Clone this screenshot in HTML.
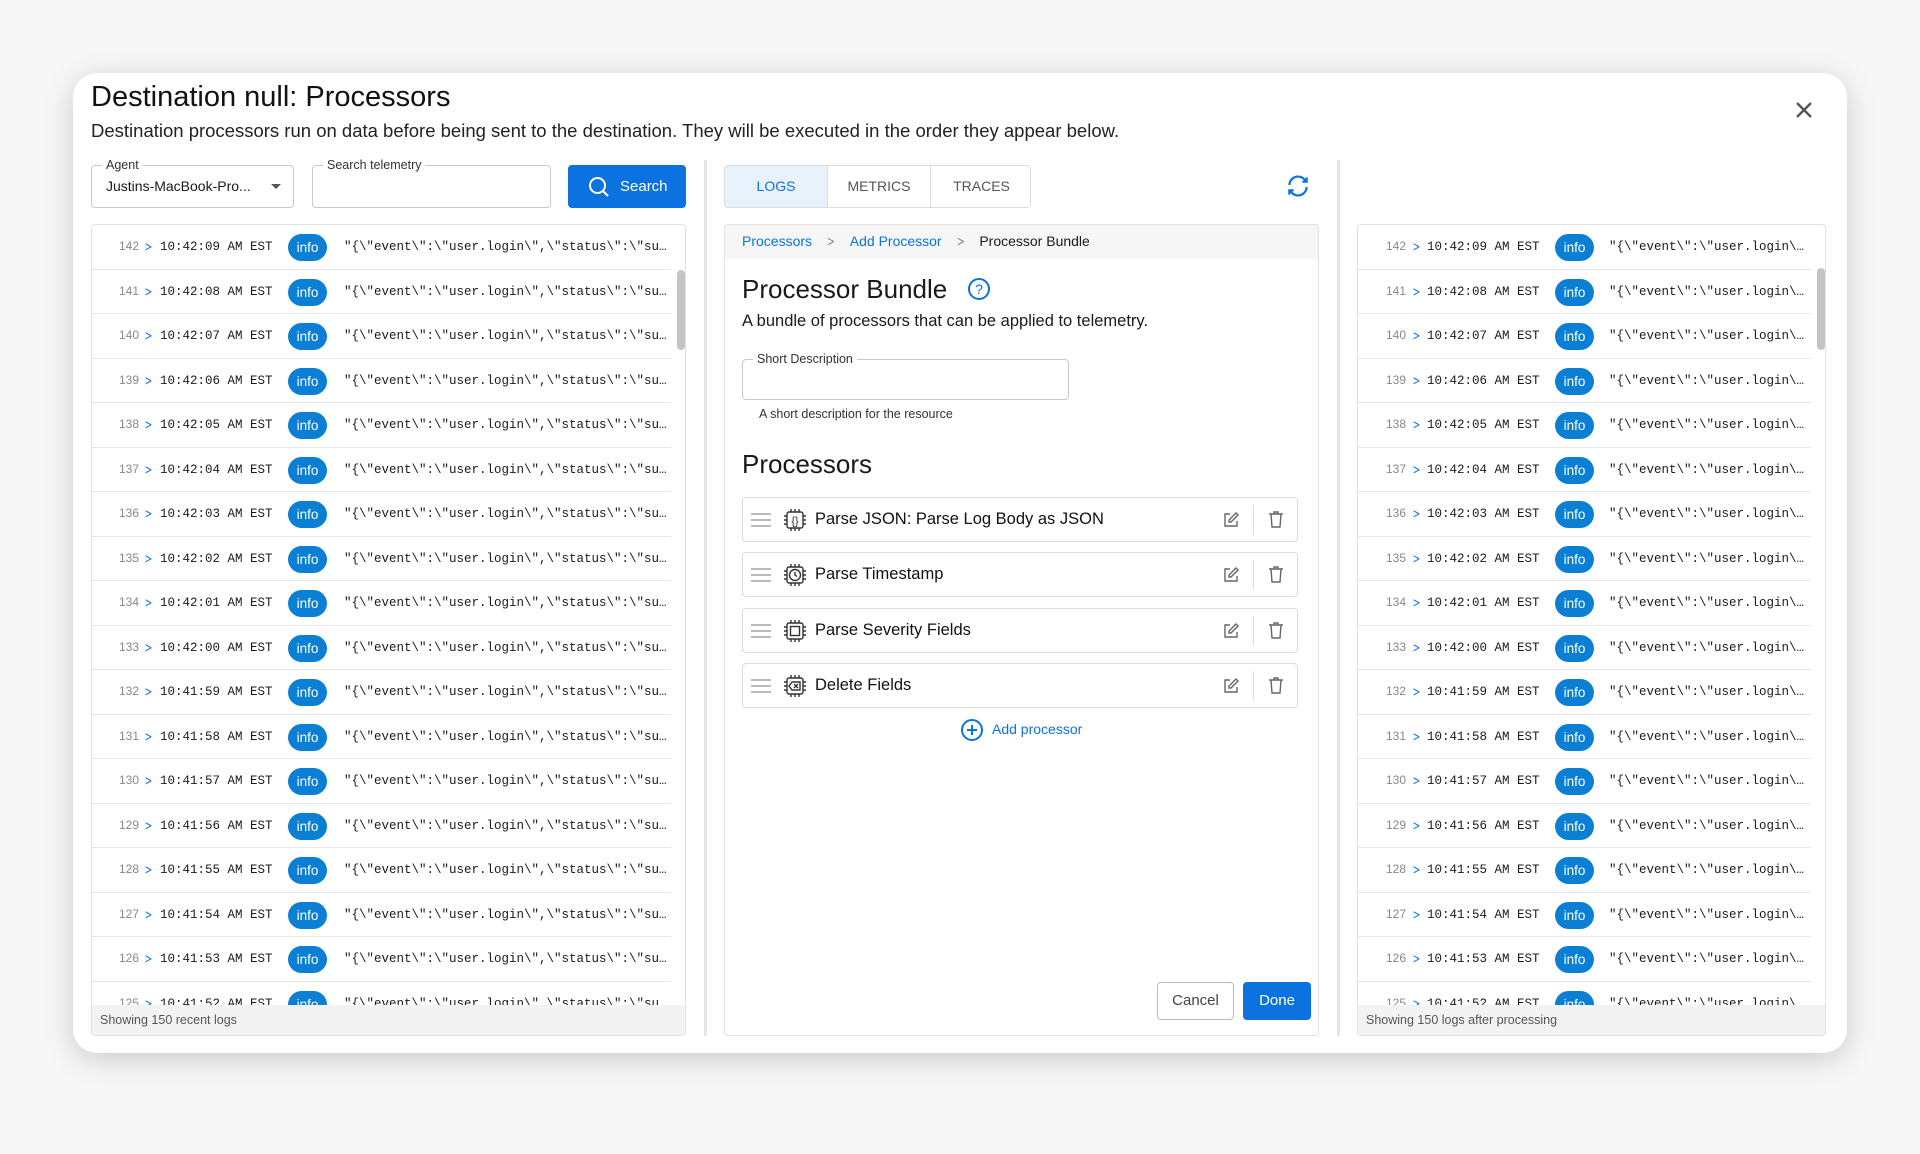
<!DOCTYPE html>
<html><head><meta charset="utf-8"><style>
*{box-sizing:border-box;margin:0;padding:0}
body{width:1920px;height:1154px;background:#f7f7f7;font-family:"Liberation Sans",sans-serif;color:#1a1a1a;position:relative;overflow:hidden}
.dlg{position:absolute;left:73px;top:73px;width:1774px;height:980px;background:#fff;border-radius:24px;box-shadow:0 6px 30px rgba(0,0,0,.18)}
.abs{position:absolute}
.title{left:18px;top:8px;font-size:29px;color:#111}
.sub{left:18px;top:47px;font-size:18.5px;color:#222}
.fld{border:1px solid #c8c8c8;border-radius:4px;background:#fff}
.lbl{position:absolute;top:-8px;left:10px;background:#fff;padding:0 4px;font-size:12.5px;color:#333}
.panel{position:absolute;border:1px solid #e2e2e2;border-radius:4px;overflow:hidden;background:#fff}
.rows{position:absolute;left:0;top:0;right:0;bottom:30px;overflow:hidden}
.row{height:44.5px;border-bottom:1px solid #e6e6e6;position:relative;font-family:"Liberation Mono",monospace;font-size:12.5px;white-space:nowrap;margin-right:14px}
.row span{position:absolute;top:15px}
.row span.n{top:14px}
.n{color:#888;font-size:12px;font-family:"Liberation Sans",sans-serif}
.ch{color:#0b72e0;font-family:"DejaVu Sans",sans-serif;font-size:13px;top:15px!important;transform:scaleX(.7)}
.pill{top:9px!important;height:27px;width:39px;border-radius:14px;background:#0a7fd4;color:#fff;font-family:"Liberation Sans",sans-serif;font-size:13.5px;text-align:center;line-height:27px}
.foot{position:absolute;left:0;right:0;bottom:0;height:30px;background:#f3f3f4;font-size:12.5px;color:#555;padding:8px 0 0 8px}
.sb{position:absolute;width:8px;border-radius:4px;background:#c4c4c4}
.proc{position:absolute;left:17px;width:556px;height:45px;border:1px solid #ddd;border-radius:4px;background:#fff}
.proc .t{position:absolute;left:72px;top:12px;font-size:16.5px;color:#111}
.hnd{position:absolute;left:8px;top:15px;width:20px;height:14px;border-top:2px solid #bbb;border-bottom:2px solid #bbb}
.hnd:after{content:"";position:absolute;left:0;right:0;top:4px;border-top:2px solid #bbb}
.vd{position:absolute;left:510px;top:7px;height:30px;border-left:1px solid #ddd}
.bs{color:#888;margin:0 13px;font-family:"DejaVu Sans",sans-serif;display:inline-block;transform:scaleX(.7)}
</style></head><body>
<div class="dlg">
<div class="abs title">Destination null: Processors</div>
<div class="abs sub">Destination processors run on data before being sent to the destination. They will be executed in the order they appear below.</div>
<svg class="abs" style="left:1721px;top:27px" width="20" height="20" viewBox="0 0 20 20"><path d="M3 3L17 17M17 3L3 17" stroke="#555" stroke-width="2.4"/></svg>

<div class="abs fld" style="left:18px;top:92px;width:203px;height:43px"><div class="lbl">Agent</div><div class="abs" style="left:14px;top:12px;font-size:14px">Justins-MacBook-Pro...</div><div class="abs" style="left:179px;top:18px;border:5px solid transparent;border-top:5px solid #555"></div></div>
<div class="abs fld" style="left:239px;top:92px;width:239px;height:43px"><div class="lbl">Search telemetry</div></div>
<div class="abs" style="left:495px;top:92px;width:118px;height:43px;background:#0b72e0;border-radius:4px;color:#fff;font-size:15px">
<svg class="abs" style="left:20px;top:11px" width="22" height="22" viewBox="0 0 22 22"><circle cx="9.5" cy="9.5" r="7.5" fill="none" stroke="#fff" stroke-width="2"/><path d="M15 15l5 5" stroke="#fff" stroke-width="2"/></svg>
<span class="abs" style="left:52px;top:13px">Search</span></div>

<div class="panel" style="left:18px;top:151px;width:595px;height:812px"><div class="rows">
<div class="row"><span class="n" style="left:27px">142</span><span class="ch" style="left:51px">&gt;</span><span style="left:68px">10:42:09 AM EST</span><span class="pill" style="left:196px">info</span><span style="left:252px">"{\"event\":\"user.login\",\"status\":\"su…</span></div>
<div class="row"><span class="n" style="left:27px">141</span><span class="ch" style="left:51px">&gt;</span><span style="left:68px">10:42:08 AM EST</span><span class="pill" style="left:196px">info</span><span style="left:252px">"{\"event\":\"user.login\",\"status\":\"su…</span></div>
<div class="row"><span class="n" style="left:27px">140</span><span class="ch" style="left:51px">&gt;</span><span style="left:68px">10:42:07 AM EST</span><span class="pill" style="left:196px">info</span><span style="left:252px">"{\"event\":\"user.login\",\"status\":\"su…</span></div>
<div class="row"><span class="n" style="left:27px">139</span><span class="ch" style="left:51px">&gt;</span><span style="left:68px">10:42:06 AM EST</span><span class="pill" style="left:196px">info</span><span style="left:252px">"{\"event\":\"user.login\",\"status\":\"su…</span></div>
<div class="row"><span class="n" style="left:27px">138</span><span class="ch" style="left:51px">&gt;</span><span style="left:68px">10:42:05 AM EST</span><span class="pill" style="left:196px">info</span><span style="left:252px">"{\"event\":\"user.login\",\"status\":\"su…</span></div>
<div class="row"><span class="n" style="left:27px">137</span><span class="ch" style="left:51px">&gt;</span><span style="left:68px">10:42:04 AM EST</span><span class="pill" style="left:196px">info</span><span style="left:252px">"{\"event\":\"user.login\",\"status\":\"su…</span></div>
<div class="row"><span class="n" style="left:27px">136</span><span class="ch" style="left:51px">&gt;</span><span style="left:68px">10:42:03 AM EST</span><span class="pill" style="left:196px">info</span><span style="left:252px">"{\"event\":\"user.login\",\"status\":\"su…</span></div>
<div class="row"><span class="n" style="left:27px">135</span><span class="ch" style="left:51px">&gt;</span><span style="left:68px">10:42:02 AM EST</span><span class="pill" style="left:196px">info</span><span style="left:252px">"{\"event\":\"user.login\",\"status\":\"su…</span></div>
<div class="row"><span class="n" style="left:27px">134</span><span class="ch" style="left:51px">&gt;</span><span style="left:68px">10:42:01 AM EST</span><span class="pill" style="left:196px">info</span><span style="left:252px">"{\"event\":\"user.login\",\"status\":\"su…</span></div>
<div class="row"><span class="n" style="left:27px">133</span><span class="ch" style="left:51px">&gt;</span><span style="left:68px">10:42:00 AM EST</span><span class="pill" style="left:196px">info</span><span style="left:252px">"{\"event\":\"user.login\",\"status\":\"su…</span></div>
<div class="row"><span class="n" style="left:27px">132</span><span class="ch" style="left:51px">&gt;</span><span style="left:68px">10:41:59 AM EST</span><span class="pill" style="left:196px">info</span><span style="left:252px">"{\"event\":\"user.login\",\"status\":\"su…</span></div>
<div class="row"><span class="n" style="left:27px">131</span><span class="ch" style="left:51px">&gt;</span><span style="left:68px">10:41:58 AM EST</span><span class="pill" style="left:196px">info</span><span style="left:252px">"{\"event\":\"user.login\",\"status\":\"su…</span></div>
<div class="row"><span class="n" style="left:27px">130</span><span class="ch" style="left:51px">&gt;</span><span style="left:68px">10:41:57 AM EST</span><span class="pill" style="left:196px">info</span><span style="left:252px">"{\"event\":\"user.login\",\"status\":\"su…</span></div>
<div class="row"><span class="n" style="left:27px">129</span><span class="ch" style="left:51px">&gt;</span><span style="left:68px">10:41:56 AM EST</span><span class="pill" style="left:196px">info</span><span style="left:252px">"{\"event\":\"user.login\",\"status\":\"su…</span></div>
<div class="row"><span class="n" style="left:27px">128</span><span class="ch" style="left:51px">&gt;</span><span style="left:68px">10:41:55 AM EST</span><span class="pill" style="left:196px">info</span><span style="left:252px">"{\"event\":\"user.login\",\"status\":\"su…</span></div>
<div class="row"><span class="n" style="left:27px">127</span><span class="ch" style="left:51px">&gt;</span><span style="left:68px">10:41:54 AM EST</span><span class="pill" style="left:196px">info</span><span style="left:252px">"{\"event\":\"user.login\",\"status\":\"su…</span></div>
<div class="row"><span class="n" style="left:27px">126</span><span class="ch" style="left:51px">&gt;</span><span style="left:68px">10:41:53 AM EST</span><span class="pill" style="left:196px">info</span><span style="left:252px">"{\"event\":\"user.login\",\"status\":\"su…</span></div>
<div class="row"><span class="n" style="left:27px">125</span><span class="ch" style="left:51px">&gt;</span><span style="left:68px">10:41:52 AM EST</span><span class="pill" style="left:196px">info</span><span style="left:252px">"{\"event\":\"user.login\",\"status\":\"su…</span></div>
</div><div class="sb" style="left:585px;top:45px;height:80px"></div><div class="foot">Showing 150 recent logs</div></div>

<div class="abs" style="left:631px;top:87px;height:876px;border-left:3px solid #e6e6e6"></div>

<div class="abs" style="left:651px;top:92px;width:307px;height:43px;border:1px solid #ddd;border-radius:4px;font-size:14px;color:#555;overflow:hidden">
<div class="abs" style="left:0;top:0;width:103px;height:41px;background:#e8f2fd;color:#0b72e0;text-align:center;line-height:41px;border-right:1px solid #ddd">LOGS</div>
<div class="abs" style="left:103px;top:0;width:103px;height:41px;text-align:center;line-height:41px;border-right:1px solid #ddd">METRICS</div>
<div class="abs" style="left:206px;top:0;width:101px;height:41px;text-align:center;line-height:41px">TRACES</div></div>
<svg class="abs" style="left:1212px;top:100px" width="26" height="26" viewBox="0 0 24 24" fill="none" stroke="#0b72e0" stroke-width="2"><path d="M4 11a8 8 0 0 1 14-5l2 2M20 4v4h-4M20 13a8 8 0 0 1-14 5l-2-2M4 20v-4h4"/></svg>

<div class="panel" style="left:651px;top:151px;width:595px;height:812px">
<div class="abs" style="left:0;top:0;right:0;height:34px;background:#f6f6f7;font-size:14px;padding:8px 0 0 17px"><span style="color:#0b72e0">Processors</span><span class="bs">&gt;</span><span style="color:#0b72e0">Add Processor</span><span class="bs">&gt;</span><span>Processor Bundle</span></div>
<div class="abs" style="left:17px;top:49px;font-size:26px">Processor Bundle</div>
<svg class="abs" style="left:242px;top:52px" width="24" height="24" viewBox="0 0 24 24"><circle cx="12" cy="12" r="10" fill="none" stroke="#0b72e0" stroke-width="2"/><text x="12" y="17" text-anchor="middle" font-size="14" fill="#0b72e0" font-family="Liberation Sans">?</text></svg>
<div class="abs" style="left:17px;top:87px;font-size:16.5px">A bundle of processors that can be applied to telemetry.</div>
<div class="abs fld" style="left:17px;top:134px;width:327px;height:41px"><div class="lbl">Short Description</div></div>
<div class="abs" style="left:34px;top:182px;font-size:12.5px;color:#333">A short description for the resource</div>
<div class="abs" style="left:17px;top:224px;font-size:26px">Processors</div>
<div class="proc" style="top:272px"><div class="hnd"></div><svg class="abs" style="left:40px;top:10px" width="24" height="24" viewBox="0 0 24 24" fill="none" stroke="#333" stroke-width="1.4"><rect x="4" y="4" width="16" height="16" rx="2"/><path d="M8 1v3M12 1v3M16 1v3M8 20v3M12 20v3M16 20v3M1 8h3M1 12h3M1 16h3M20 8h3M20 12h3M20 16h3"/><text x="12" y="16.5" text-anchor="middle" font-size="11" fill="#333" stroke="none" font-family="Liberation Sans">{}</text></svg><div class="t">Parse JSON: Parse Log Body as JSON</div><svg class="abs" style="left:479px;top:13px" width="18" height="18" viewBox="0 0 18 18" fill="none" stroke="#666" stroke-width="1.4"><path d="M8 3H3v12h12v-5M14 2l2 2-7 7H7V9z"/></svg><div class="vd"></div><svg class="abs" style="left:525px;top:12px" width="16" height="19" viewBox="0 0 16 19" fill="none" stroke="#666" stroke-width="1.4"><path d="M1 4h14M6 4V2h4v2M3 4l1 13h8l1-13"/></svg></div>
<div class="proc" style="top:327px"><div class="hnd"></div><svg class="abs" style="left:40px;top:10px" width="24" height="24" viewBox="0 0 24 24" fill="none" stroke="#333" stroke-width="1.4"><rect x="4" y="4" width="16" height="16" rx="2"/><path d="M8 1v3M12 1v3M16 1v3M8 20v3M12 20v3M16 20v3M1 8h3M1 12h3M1 16h3M20 8h3M20 12h3M20 16h3"/><circle cx="12" cy="12" r="5.5"/><path d="M12 9v3l2 1.5"/></svg><div class="t">Parse Timestamp</div><svg class="abs" style="left:479px;top:13px" width="18" height="18" viewBox="0 0 18 18" fill="none" stroke="#666" stroke-width="1.4"><path d="M8 3H3v12h12v-5M14 2l2 2-7 7H7V9z"/></svg><div class="vd"></div><svg class="abs" style="left:525px;top:12px" width="16" height="19" viewBox="0 0 16 19" fill="none" stroke="#666" stroke-width="1.4"><path d="M1 4h14M6 4V2h4v2M3 4l1 13h8l1-13"/></svg></div>
<div class="proc" style="top:383px"><div class="hnd"></div><svg class="abs" style="left:40px;top:10px" width="24" height="24" viewBox="0 0 24 24" fill="none" stroke="#333" stroke-width="1.4"><rect x="4" y="4" width="16" height="16" rx="2"/><path d="M8 1v3M12 1v3M16 1v3M8 20v3M12 20v3M16 20v3M1 8h3M1 12h3M1 16h3M20 8h3M20 12h3M20 16h3"/><rect x="7.5" y="7.5" width="9" height="9"/></svg><div class="t">Parse Severity Fields</div><svg class="abs" style="left:479px;top:13px" width="18" height="18" viewBox="0 0 18 18" fill="none" stroke="#666" stroke-width="1.4"><path d="M8 3H3v12h12v-5M14 2l2 2-7 7H7V9z"/></svg><div class="vd"></div><svg class="abs" style="left:525px;top:12px" width="16" height="19" viewBox="0 0 16 19" fill="none" stroke="#666" stroke-width="1.4"><path d="M1 4h14M6 4V2h4v2M3 4l1 13h8l1-13"/></svg></div>
<div class="proc" style="top:438px"><div class="hnd"></div><svg class="abs" style="left:40px;top:10px" width="24" height="24" viewBox="0 0 24 24" fill="none" stroke="#333" stroke-width="1.4"><rect x="4" y="4" width="16" height="16" rx="2"/><path d="M8 1v3M12 1v3M16 1v3M8 20v3M12 20v3M16 20v3M1 8h3M1 12h3M1 16h3M20 8h3M20 12h3M20 16h3"/><path d="M6 12l3-4h8v8H9zM11 10l4 4M15 10l-4 4"/></svg><div class="t">Delete Fields</div><svg class="abs" style="left:479px;top:13px" width="18" height="18" viewBox="0 0 18 18" fill="none" stroke="#666" stroke-width="1.4"><path d="M8 3H3v12h12v-5M14 2l2 2-7 7H7V9z"/></svg><div class="vd"></div><svg class="abs" style="left:525px;top:12px" width="16" height="19" viewBox="0 0 16 19" fill="none" stroke="#666" stroke-width="1.4"><path d="M1 4h14M6 4V2h4v2M3 4l1 13h8l1-13"/></svg></div>
<svg class="abs" style="left:235px;top:493px" width="24" height="24" viewBox="0 0 24 24" fill="none" stroke="#0b72e0" stroke-width="2"><circle cx="12" cy="12" r="10"/><path d="M12 7v10M7 12h10"/></svg>
<div class="abs" style="left:267px;top:496px;font-size:14px;color:#0b72e0">Add processor</div>
<div class="abs" style="left:432px;top:757px;width:77px;height:38px;border:1px solid #bbb;border-radius:4px;text-align:center;line-height:36px;font-size:15px;color:#444">Cancel</div>
<div class="abs" style="left:518px;top:757px;width:68px;height:38px;background:#0b72e0;border-radius:4px;text-align:center;line-height:38px;font-size:15px;color:#fff">Done</div>
</div>

<div class="abs" style="left:1264px;top:87px;height:876px;border-left:3px solid #e6e6e6"></div>

<div class="panel" style="left:1284px;top:151px;width:469px;height:812px"><div class="rows">
<div class="row"><span class="n" style="left:28px">142</span><span class="ch" style="left:53px">&gt;</span><span style="left:69px">10:42:09 AM EST</span><span class="pill" style="left:197px">info</span><span style="left:251px">"{\"event\":\"user.login\…</span></div>
<div class="row"><span class="n" style="left:28px">141</span><span class="ch" style="left:53px">&gt;</span><span style="left:69px">10:42:08 AM EST</span><span class="pill" style="left:197px">info</span><span style="left:251px">"{\"event\":\"user.login\…</span></div>
<div class="row"><span class="n" style="left:28px">140</span><span class="ch" style="left:53px">&gt;</span><span style="left:69px">10:42:07 AM EST</span><span class="pill" style="left:197px">info</span><span style="left:251px">"{\"event\":\"user.login\…</span></div>
<div class="row"><span class="n" style="left:28px">139</span><span class="ch" style="left:53px">&gt;</span><span style="left:69px">10:42:06 AM EST</span><span class="pill" style="left:197px">info</span><span style="left:251px">"{\"event\":\"user.login\…</span></div>
<div class="row"><span class="n" style="left:28px">138</span><span class="ch" style="left:53px">&gt;</span><span style="left:69px">10:42:05 AM EST</span><span class="pill" style="left:197px">info</span><span style="left:251px">"{\"event\":\"user.login\…</span></div>
<div class="row"><span class="n" style="left:28px">137</span><span class="ch" style="left:53px">&gt;</span><span style="left:69px">10:42:04 AM EST</span><span class="pill" style="left:197px">info</span><span style="left:251px">"{\"event\":\"user.login\…</span></div>
<div class="row"><span class="n" style="left:28px">136</span><span class="ch" style="left:53px">&gt;</span><span style="left:69px">10:42:03 AM EST</span><span class="pill" style="left:197px">info</span><span style="left:251px">"{\"event\":\"user.login\…</span></div>
<div class="row"><span class="n" style="left:28px">135</span><span class="ch" style="left:53px">&gt;</span><span style="left:69px">10:42:02 AM EST</span><span class="pill" style="left:197px">info</span><span style="left:251px">"{\"event\":\"user.login\…</span></div>
<div class="row"><span class="n" style="left:28px">134</span><span class="ch" style="left:53px">&gt;</span><span style="left:69px">10:42:01 AM EST</span><span class="pill" style="left:197px">info</span><span style="left:251px">"{\"event\":\"user.login\…</span></div>
<div class="row"><span class="n" style="left:28px">133</span><span class="ch" style="left:53px">&gt;</span><span style="left:69px">10:42:00 AM EST</span><span class="pill" style="left:197px">info</span><span style="left:251px">"{\"event\":\"user.login\…</span></div>
<div class="row"><span class="n" style="left:28px">132</span><span class="ch" style="left:53px">&gt;</span><span style="left:69px">10:41:59 AM EST</span><span class="pill" style="left:197px">info</span><span style="left:251px">"{\"event\":\"user.login\…</span></div>
<div class="row"><span class="n" style="left:28px">131</span><span class="ch" style="left:53px">&gt;</span><span style="left:69px">10:41:58 AM EST</span><span class="pill" style="left:197px">info</span><span style="left:251px">"{\"event\":\"user.login\…</span></div>
<div class="row"><span class="n" style="left:28px">130</span><span class="ch" style="left:53px">&gt;</span><span style="left:69px">10:41:57 AM EST</span><span class="pill" style="left:197px">info</span><span style="left:251px">"{\"event\":\"user.login\…</span></div>
<div class="row"><span class="n" style="left:28px">129</span><span class="ch" style="left:53px">&gt;</span><span style="left:69px">10:41:56 AM EST</span><span class="pill" style="left:197px">info</span><span style="left:251px">"{\"event\":\"user.login\…</span></div>
<div class="row"><span class="n" style="left:28px">128</span><span class="ch" style="left:53px">&gt;</span><span style="left:69px">10:41:55 AM EST</span><span class="pill" style="left:197px">info</span><span style="left:251px">"{\"event\":\"user.login\…</span></div>
<div class="row"><span class="n" style="left:28px">127</span><span class="ch" style="left:53px">&gt;</span><span style="left:69px">10:41:54 AM EST</span><span class="pill" style="left:197px">info</span><span style="left:251px">"{\"event\":\"user.login\…</span></div>
<div class="row"><span class="n" style="left:28px">126</span><span class="ch" style="left:53px">&gt;</span><span style="left:69px">10:41:53 AM EST</span><span class="pill" style="left:197px">info</span><span style="left:251px">"{\"event\":\"user.login\…</span></div>
<div class="row"><span class="n" style="left:28px">125</span><span class="ch" style="left:53px">&gt;</span><span style="left:69px">10:41:52 AM EST</span><span class="pill" style="left:197px">info</span><span style="left:251px">"{\"event\":\"user.login\…</span></div>
</div><div class="sb" style="left:459px;top:43px;height:82px"></div><div class="foot">Showing 150 logs after processing</div></div>
</div>
</body></html>
